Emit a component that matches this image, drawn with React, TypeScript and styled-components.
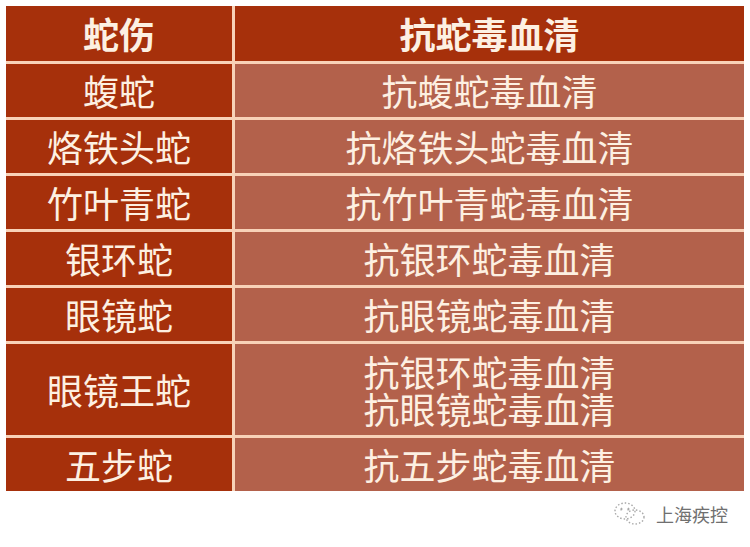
import React from "react";
import styled, { createGlobalStyle } from "styled-components";

const Global = createGlobalStyle`
  html, body { margin: 0; padding: 0; background: #ffffff; }
  body { font-family: "Noto Sans CJK SC", "Noto Sans", sans-serif; }
`;

const Page = styled.div`
  width: 750px;
  height: 547px;
  box-sizing: border-box;
  padding: 6px 6px 0 6px;
  background: #ffffff;
  overflow: hidden;
`;

const Table = styled.div`
  display: grid;
  grid-template-columns: 226px 509px;
  gap: 3px;
  width: 738px;
  background: #f8d2b8;
`;

const Cell = styled.div<{ $h: number; $light?: boolean; $head?: boolean }>`
  height: ${(p) => p.$h}px;
  display: flex;
  flex-direction: column;
  align-items: center;
  justify-content: center;
  background: ${(p) => (p.$light ? "#b3614b" : "#a6300b")};
  color: #fdf0e2;
  font-family: "Noto Sans CJK SC", sans-serif;
  font-size: 36px;
  font-weight: ${(p) => (p.$head ? 700 : 400)};
  line-height: 37px;
  letter-spacing: 0;
`;

const Line = styled.span`
  display: block;
  height: 37px;
  line-height: 37px;
`;

const Footer = styled.div`
  display: flex;
  justify-content: flex-end;
  align-items: center;
  gap: 9px;
  height: 46px;
  padding-right: 16px;
  color: #707070;
  font-family: "Noto Sans CJK SC", sans-serif;
  font-size: 18px;
`;

const Logo = () => (
  <svg width="34" height="26" viewBox="0 0 34 26" fill="none" stroke="#a8a8a8" strokeWidth="1.4" strokeDasharray="1.5 2">
    <ellipse cx="12" cy="10" rx="10" ry="8" />
    <ellipse cx="22" cy="16" rx="9" ry="7" />
    <circle cx="8" cy="8" r="0.8" fill="#a8a8a8" />
    <circle cx="15" cy="8" r="0.8" fill="#a8a8a8" />
  </svg>
);

const rows: { name: string; serum: string[]; h: number }[] = [
  { name: "蝮蛇", serum: ["抗蝮蛇毒血清"], h: 53 },
  { name: "烙铁头蛇", serum: ["抗烙铁头蛇毒血清"], h: 53 },
  { name: "竹叶青蛇", serum: ["抗竹叶青蛇毒血清"], h: 53 },
  { name: "银环蛇", serum: ["抗银环蛇毒血清"], h: 53 },
  { name: "眼镜蛇", serum: ["抗眼镜蛇毒血清"], h: 53 },
  { name: "眼镜王蛇", serum: ["抗银环蛇毒血清", "抗眼镜蛇毒血清"], h: 91 },
  { name: "五步蛇", serum: ["抗五步蛇毒血清"], h: 53 },
];

export default function App() {
  return (
    <Page>
      <Global />
      <Table>
        <Cell $h={55} $head>蛇伤</Cell>
        <Cell $h={55} $head>抗蛇毒血清</Cell>
        {rows.map((r) => (
          <React.Fragment key={r.name}>
            <Cell $h={r.h}>{r.name}</Cell>
            <Cell $h={r.h} $light>
              {r.serum.map((s, i) => (
                <Line key={i}>{s}</Line>
              ))}
            </Cell>
          </React.Fragment>
        ))}
      </Table>
      <Footer>
        <Logo />
        <span>上海疾控</span>
      </Footer>
    </Page>
  );
}
